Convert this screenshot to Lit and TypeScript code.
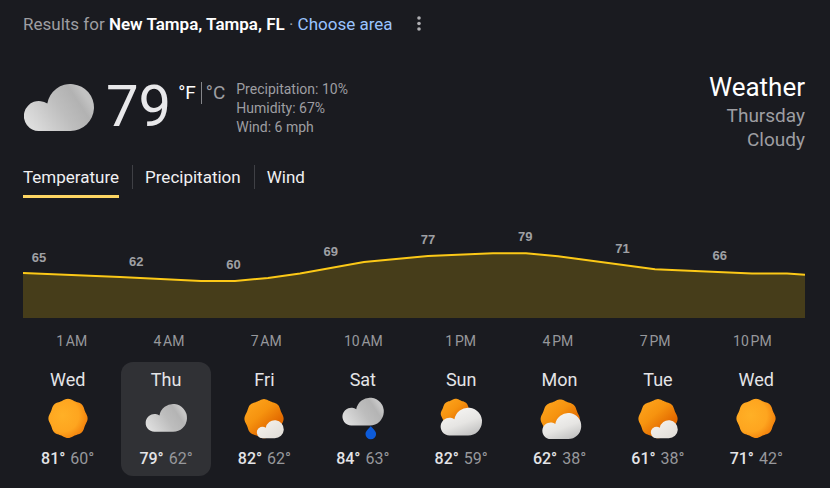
import { LitElement, html, svg, css } from "lit";
import { customElement, property, state } from "lit/decorators.js";
import { classMap } from "lit/directives/class-map.js";

type Sky = "sunny" | "cloudy" | "mostly-sunny" | "rain" | "mostly-cloudy" | "partly-cloudy";

const CLOUD = "M15 47A15 15 0 1 1 23.3 19.6A23.5 23.5 0 1 1 46.5 47Z";

function sunPath(cx: number, cy: number, r: number): string {
  const points: string[] = [];
  for (let deg = 0; deg < 360; deg += 3) {
    const a = (deg * Math.PI) / 180;
    const d = r * (0.96 + 0.03 * Math.cos(8 * a));
    points.push(`${(cx + d * Math.cos(a)).toFixed(2)} ${(cy + d * Math.sin(a)).toFixed(2)}`);
  }
  return `M${points.join("L")}Z`;
}

@customElement("weather-icon")
export class WeatherIcon extends LitElement {
  @property() sky: Sky = "sunny";

  static styles = css`
    :host { display: block; }
    .art { display: block; width: 100%; height: 100%; }
  `;

  private sun(cx: number, cy: number, r: number, fill = "sun") {
    return svg`<path d=${sunPath(cx, cy, r)} fill=${`url(#${fill})`}></path>`;
  }

  private cloud(x: number, y: number, scale: number, fill: string) {
    return svg`<path d=${CLOUD} transform=${`translate(${x} ${y}) scale(${scale})`} fill=${`url(#${fill})`}></path>`;
  }

  private art() {
    switch (this.sky) {
      case "sunny":
        return this.sun(24, 23.4, 19.8);
      case "cloudy":
        return this.cloud(3.7, 9, 0.59, "grey");
      case "mostly-sunny":
        return svg`${this.sun(24, 23.7, 19.8, "dusk")}${this.cloud(16.8, 25.2, 0.386, "cream")}`;
      case "rain":
        return svg`${this.cloud(3.5, 2.7, 0.59, "grey")}
          <path d="M31.8 31c1.6 2.4 5.3 4.8 5.3 8a5.3 5.2 0 0 1-10.6 0c0-3.2 3.7-5.6 5.3-8z" fill="#0d5bd9"></path>`;
      case "mostly-cloudy":
        return svg`${this.sun(18.8, 18.8, 15.2, "dusk")}${this.cloud(3.7, 12.7, 0.59, "white")}`;
      case "partly-cloudy":
        return svg`${this.sun(24.2, 24, 19.8, "dusk")}${this.cloud(6.4, 18, 0.555, "white")}`;
    }
  }

  render() {
    return html`<svg class="art" viewBox="0 0 48 48" aria-hidden="true">
      <defs>
        <radialGradient id="sun" cx="0.36" cy="0.42" r="0.7">
          <stop offset="0" stop-color="#ffb026"></stop>
          <stop offset="0.6" stop-color="#fea51f"></stop>
          <stop offset="1" stop-color="#f07a08"></stop>
        </radialGradient>
        <linearGradient id="dusk" x1="0.1" y1="0.1" x2="0.8" y2="0.9">
          <stop offset="0" stop-color="#fda31c"></stop>
          <stop offset="0.4" stop-color="#f6930f"></stop>
          <stop offset="0.8" stop-color="#e36a00"></stop>
        </linearGradient>
        <linearGradient id="grey" x1="0" y1="0.7" x2="0.9" y2="0.3">
          <stop offset="0" stop-color="#dedede"></stop>
          <stop offset="0.55" stop-color="#bdbdbd"></stop>
          <stop offset="0.85" stop-color="#b4b4b4"></stop>
          <stop offset="1" stop-color="#c6c6c6"></stop>
        </linearGradient>
        <linearGradient id="cream" x1="0" y1="0" x2="1" y2="1">
          <stop offset="0" stop-color="#f8f4ee"></stop>
          <stop offset="1" stop-color="#dedbd6"></stop>
        </linearGradient>
        <linearGradient id="white" x1="0.3" y1="0.1" x2="0.8" y2="1">
          <stop offset="0" stop-color="#f4f3f1"></stop>
          <stop offset="0.5" stop-color="#e6e5e3"></stop>
          <stop offset="1" stop-color="#bfbfbf"></stop>
        </linearGradient>
      </defs>
      ${this.art()}
    </svg>`;
  }
}

const DAYS: { day: string; sky: Sky; high: number; low: number }[] = [
  { day: "Wed", sky: "sunny", high: 81, low: 60 },
  { day: "Thu", sky: "cloudy", high: 79, low: 62 },
  { day: "Fri", sky: "mostly-sunny", high: 82, low: 62 },
  { day: "Sat", sky: "rain", high: 84, low: 63 },
  { day: "Sun", sky: "mostly-cloudy", high: 82, low: 59 },
  { day: "Mon", sky: "partly-cloudy", high: 62, low: 38 },
  { day: "Tue", sky: "mostly-sunny", high: 61, low: 38 },
  { day: "Wed", sky: "sunny", high: 71, low: 42 },
];

/* Temperature and the height of the curve under its label. */
const READINGS = [
  { temp: 65, level: 45 },
  { temp: 62, level: 41 },
  { temp: 60, level: 38 },
  { temp: 69, level: 51 },
  { temp: 77, level: 63 },
  { temp: 79, level: 66 },
  { temp: 71, level: 54 },
  { temp: 66, level: 47 },
];

const HOURS = ["1", "4", "7", "10", "1", "4", "7", "10"];
const CURVE =
  "0 45 97 41 178 37 212 37 245 40 277 44.5 341 56 405 62 470 64.7 503 64.7 535 61.7 632 48.7 729 44.5 764 44.5 782 43.3";
const PLOT_HEIGHT = 96;

@customElement("app-root")
export class AppRoot extends LitElement {
  @state() private tab = "Temperature";
  @state() private selected = 1;

  static styles = css`
    :host {
      display: block;
      min-height: 100vh;
      box-sizing: border-box;
      padding: 12px 25px 12px 23px;
      background: #1a1b20;
      color: #e8e8ea;
      font-family: Roboto, "Liberation Sans", sans-serif;
      font-size: 16px;
      line-height: 24px;
    }
    button {
      padding: 0;
      border: 0;
      background: none;
      color: inherit;
      font: inherit;
      cursor: pointer;
    }
    a { color: inherit; text-decoration: none; }
    p, h1 { margin: 0; font-weight: 400; }
    .results { display: flex; align-items: center; gap: 20px; font-size: 17px; color: #9e9ea2; }
    .place { color: #fff; font-weight: 600; }
    .choose { color: #99c3ff; }
    .more { display: flex; width: 12px; height: 24px; align-items: center; justify-content: center; }
    .dots { display: block; width: 4px; height: 16px; fill: #aeaeb2; }
    .now { display: flex; align-items: flex-start; margin-top: 36px; height: 84px; }
    .now-icon { width: 70px; height: 47px; margin: 12px 12px 0 1px; }
    .degrees { font-size: 58px; line-height: 68px; }
    .units { display: flex; margin: 10px 11px 0 7px; line-height: 22px; font-size: 19px; }
    .unit-on { padding-right: 5px; border-right: 1px solid #85868a; color: #fff; }
    .unit-off { padding-left: 4px; color: #9e9ea2; }
    .facts { margin-top: 8px; font-size: 14px; line-height: 19px; color: #9e9ea2; }
    .heading { margin-left: auto; text-align: right; font-size: 19px; line-height: 24px; color: #9e9ea2; }
    .title { margin-bottom: 2px; font-size: 26px; line-height: 30px; color: #fff; }
    .tabs { display: flex; align-items: flex-start; margin-top: 9px; font-size: 17px; }
    .tab { height: 33px; box-sizing: border-box; border-bottom: 3px solid transparent; line-height: 24px; padding-bottom: 6px; color: #f0f0f2; }
    .tab.active { border-bottom-color: #fdd663; }
    .rule { width: 1px; height: 24px; margin: 0 12px 0 13px; background: #3f4045; }
    .chart { display: grid; margin-top: 24px; }
    .plot, .values { grid-area: 1 / 1; }
    .plot { display: block; width: 100%; height: 96px; }
    .area { fill: #463d1a; }
    .line { fill: none; stroke: #fcc917; stroke-width: 2; vector-effect: non-scaling-stroke; }
    .values, .hours { display: grid; grid-template-columns: repeat(8, 1fr); padding-right: 4px; }
    .values { align-items: end; }
    .value { width: 32px; text-align: center; font-family: "Liberation Sans", Arial, sans-serif; font-size: 13px; line-height: 16px; font-weight: 700; color: #9fa0a4; }
    .hours { margin-top: 13px; font-size: 14px; line-height: 20px; color: #97989c; text-align: center; }
    .days { display: grid; grid-template-columns: repeat(8, 1fr); gap: 9px; margin-top: 11px; padding-right: 4px; }
    .day { display: flex; flex-direction: column; align-items: center; height: 114px; border-radius: 12px; color: #e4e4e7; }
    .day.selected { background: #303135; }
    .name { margin-top: 6px; font-size: 18px; }
    .day-icon { width: 48px; height: 48px; margin: 3px 0 4px; }
    .temps { display: flex; gap: 5px; }
    .high { font-weight: 500; }
    .low { color: #97989c; }
  `;

  render() {
    return html`
      <div class="results">
        <p>Results for <span class="place">New Tampa, Tampa, FL</span> · <a class="choose" href="#area">Choose area</a></p>
        <button class="more" aria-label="More options">
          <svg class="dots" viewBox="0 0 4 16"><circle cx="2" cy="2" r="1.8"></circle><circle cx="2" cy="7.5" r="1.8"></circle><circle cx="2" cy="13" r="1.8"></circle></svg>
        </button>
      </div>

      <section class="now">
        <svg class="now-icon" viewBox="0 0 70 47" role="img" aria-label="Cloudy">
          <defs>
            <linearGradient id="overcast" x1="0" y1="0.7" x2="0.9" y2="0.3">
              <stop offset="0" stop-color="#dedede"></stop>
              <stop offset="0.55" stop-color="#bebebe"></stop>
              <stop offset="0.85" stop-color="#b2b2b2"></stop>
              <stop offset="1" stop-color="#c2c2c2"></stop>
            </linearGradient>
          </defs>
          <path d=${CLOUD} fill="url(#overcast)"></path>
        </svg>
        <div class="degrees">79</div>
        <div class="units">
          <span class="unit-on">°F</span><a class="unit-off" href="#celsius">°C</a>
        </div>
        <div class="facts">
          <p>Precipitation: 10%</p>
          <p>Humidity: 67%</p>
          <p>Wind: 6 mph</p>
        </div>
        <div class="heading">
          <h1 class="title">Weather</h1>
          <p>Thursday</p>
          <p>Cloudy</p>
        </div>
      </section>

      <div class="tabs" role="tablist">
        ${["Temperature", "Precipitation", "Wind"].map(
          (name, i) => html`${i ? html`<span class="rule"></span>` : ""}<button
              class=${classMap({ tab: true, active: this.tab === name })}
              role="tab"
              aria-selected=${this.tab === name}
              @click=${() => (this.tab = name)}
            >${name}</button>`
        )}
      </div>

      <div class="chart">
        <svg class="plot" viewBox="0 0 782 ${PLOT_HEIGHT}" preserveAspectRatio="none" aria-hidden="true">
          <g transform="translate(0 ${PLOT_HEIGHT}) scale(1 -1)">
            <polygon class="area" points="0 0 ${CURVE} 782 0"></polygon>
            <polyline class="line" points=${CURVE}></polyline>
          </g>
        </svg>
        <div class="values">
          ${READINGS.map(
            (r) => html`<span class="value" style="padding-bottom:${r.level + 7}px">${r.temp}</span>`
          )}
        </div>
      </div>
      <div class="hours">
        ${HOURS.map((h, i) => html`<span>${h}\u202f${i < 4 ? "AM" : "PM"}</span>`)}
      </div>

      <div class="days">
        ${DAYS.map(
          (d, i) => html`<button
            class=${classMap({ day: true, selected: this.selected === i })}
            aria-pressed=${this.selected === i}
            @click=${() => (this.selected = i)}
          >
            <span class="name">${d.day}</span>
            <weather-icon class="day-icon" .sky=${d.sky}></weather-icon>
            <span class="temps"><span class="high">${d.high}°</span><span class="low">${d.low}°</span></span>
          </button>`
        )}
      </div>
    `;
  }
}
